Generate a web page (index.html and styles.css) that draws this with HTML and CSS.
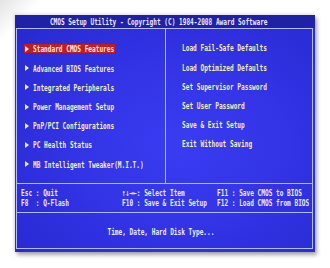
FILE: index.html
```html
<!DOCTYPE html>
<html>
<head>
<meta charset="utf-8">
<link rel="stylesheet" href="styles.css">
</head>
<body>
<div class="page">
  <div class="screen">
    <div class="title"><span class="t c">CMOS Setup Utility - Copyright (C) 1984-2008 Award Software</span></div>
    <div class="box">
      <div class="menu">
        <ul class="col left">
          <li class="item"><span class="hl sel"><i class="arr"></i><span class="t">Standard CMOS Features</span></span></li>
          <li class="item"><span class="hl"><i class="arr"></i><span class="t">Advanced BIOS Features</span></span></li>
          <li class="item"><span class="hl"><i class="arr"></i><span class="t">Integrated Peripherals</span></span></li>
          <li class="item"><span class="hl"><i class="arr"></i><span class="t">Power Management Setup</span></span></li>
          <li class="item"><span class="hl"><i class="arr"></i><span class="t">PnP/PCI Configurations</span></span></li>
          <li class="item"><span class="hl"><i class="arr"></i><span class="t">PC Health Status</span></span></li>
          <li class="item"><span class="hl"><i class="arr"></i><span class="t">MB Intelligent Tweaker(M.I.T.)</span></span></li>
        </ul>
        <ul class="col right">
          <li class="item"><span class="t">Load Fail-Safe Defaults</span></li>
          <li class="item"><span class="t">Load Optimized Defaults</span></li>
          <li class="item"><span class="t">Set Supervisor Password</span></li>
          <li class="item"><span class="t">Set User Password</span></li>
          <li class="item"><span class="t">Save &amp; Exit Setup</span></li>
          <li class="item"><span class="t">Exit Without Saving</span></li>
        </ul>
      </div>
      <div class="keys">
        <span class="k"><span class="t">Esc : Quit</span></span>
        <span class="k"><span class="t">↑↓→←: Select Item</span></span>
        <span class="k"><span class="t">F11 : Save CMOS to BIOS</span></span>
        <span class="k"><span class="t">F8  : Q-Flash</span></span>
        <span class="k"><span class="t">F10 : Save &amp; Exit Setup</span></span>
        <span class="k"><span class="t">F12 : Load CMOS from BIOS</span></span>
      </div>
      <div class="help"><span class="t c">Time, Date, Hard Disk Type...</span></div>
    </div>
  </div>
</div>
</body>
</html>
```
FILE: styles.css
```css
html, body {
  margin: 0;
  padding: 0;
  background: #ffffff;
}
.page {
  width: 330px;
  height: 268px;
  padding: 15px 0 0 15px;
  box-sizing: border-box;
  background: linear-gradient(135deg, #e4e4e4 0px, #ffffff 30px);
  overflow: hidden;
}
.screen {
  width: 300px;
  height: 237px;
  background: radial-gradient(ellipse at 55% 55%, #3a3cf2 0%, #3032e2 55%, #2628cc 100%);
  box-shadow: 2px 3px 4px rgba(0, 0, 0, 0.35), -1px -1px 3px rgba(0, 0, 0, 0.12);
  display: flex;
  flex-direction: column;
  font-family: "DejaVu Sans Mono", "Liberation Mono", monospace;
  font-weight: bold;
  font-size: 9.5px;
  color: #f0eec4;
  overflow: hidden;
}
.t {
  display: inline-block;
  white-space: pre;
  transform: scaleX(0.645);
  transform-origin: 0 50%;
}
.t.c {
  transform-origin: 50% 50%;
}
.title {
  flex: none;
  height: 13px;
  line-height: 13px;
  background: #1f21a6;
  display: flex;
  justify-content: center;
  color: #e8e8ff;
  padding-right: 13px;
  overflow: hidden;
}
.box {
  margin: 0 2px 3px 1px;
  border: 1px solid #b4bcff;
  flex: 1;
  display: flex;
  flex-direction: column;
  overflow: hidden;
}
.menu {
  flex: none;
  height: 154px;
  display: grid;
  grid-template-columns: 148px 1fr;
}
.col {
  list-style: none;
  margin: 0;
  padding: 0;
  overflow: hidden;
}
.col.left {
  padding: 10.4px 0 0 7px;
}
.col.right {
  border-left: 1px solid #b4bcff;
  padding: 9.4px 0 0 16px;
  color: #f2eeb4;
}
.item {
  height: 19.2px;
  display: flex;
  align-items: center;
}
.hl {
  display: flex;
  align-items: center;
  height: 9px;
  padding: 0 1px;
  gap: 4px;
}
.hl.sel {
  width: 89px;
  background: #c41c1c;
  color: #ffece4;
}
.arr {
  flex: none;
  width: 0;
  height: 0;
  border-left: 4px solid currentColor;
  border-top: 3px solid transparent;
  border-bottom: 3px solid transparent;
}
.keys {
  flex: none;
  border-top: 1px solid #b4bcff;
  border-bottom: 1px solid #b4bcff;
  padding: 4px 0 0 4px;
  box-sizing: border-box;
  height: 30px;
  display: grid;
  grid-template-columns: 101px 95px 1fr;
  grid-auto-rows: 10px;
  line-height: 10px;
  color: #eceaff;
  overflow: hidden;
}
.k {
  white-space: nowrap;
  overflow: visible;
}
.help {
  flex: 1;
  display: flex;
  justify-content: center;
  padding: 14px 7px 0 0;
  line-height: 10px;
  color: #eceaff;
}
```
